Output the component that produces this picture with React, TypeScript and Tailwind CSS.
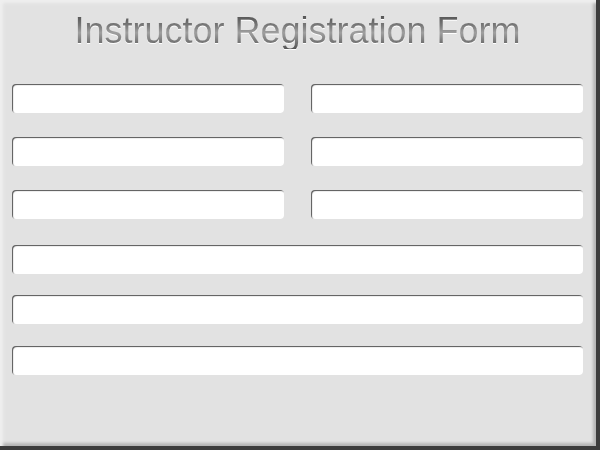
import React from "react";

const inputCls =
  "block h-[29px] rounded-[4px] bg-white border-0 outline-none shadow-[inset_1px_1px_1px_#555]";

export default function App() {
  return (
    <div className="w-[600px] h-[450px] bg-[#3c3c3c]" style={{ fontFamily: '"Liberation Sans", Arial, sans-serif' }}>
      <div className="w-[596px] h-[446px] bg-[#e2e2e2] shadow-[inset_3px_3px_3px_#efefef,inset_-3px_-3px_3px_#b5b5b5] pl-[12px] pt-[13px]">
        <h1
          className="text-center text-[36px] leading-[36px] font-normal pr-[13px] bg-clip-text text-transparent bg-[linear-gradient(to_bottom,#4a4a4a_0%,#7a7a7a_35%,#a0a0a0_55%,#555555_100%)] drop-shadow-[0_1px_0_#ffffff]"
        >
          Instructor Registration Form
        </h1>
        <div className="mt-[35px] grid grid-cols-[272px_272px] gap-x-[27px] gap-y-[24px] w-[571px]">
          <input className={inputCls + " w-[272px]"} />
          <input className={inputCls + " w-[272px]"} />
          <input className={inputCls + " w-[272px]"} />
          <input className={inputCls + " w-[272px]"} />
          <input className={inputCls + " w-[272px]"} />
          <input className={inputCls + " w-[272px]"} />
        </div>
        <input className={inputCls + " w-[571px] mt-[26px]"} />
        <input className={inputCls + " w-[571px] mt-[21px]"} />
        <input className={inputCls + " w-[571px] mt-[22px]"} />
      </div>
    </div>
  );
}
